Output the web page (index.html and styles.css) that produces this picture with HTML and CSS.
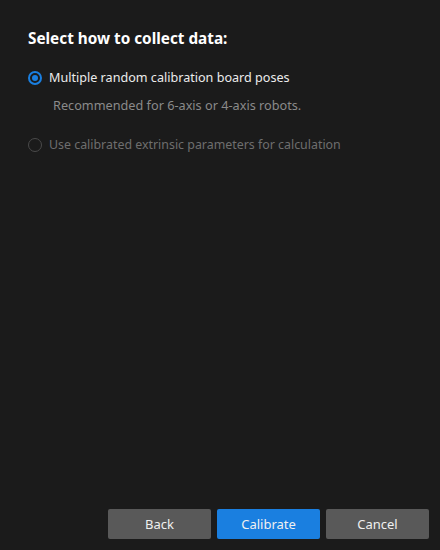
FILE: index.html
```html
<!DOCTYPE html>
<html>
<head>
<meta charset="utf-8">
<link rel="stylesheet" href="styles.css">
</head>
<body>
<div class="dialog">
  <div class="content">
    <h1 class="title">Select how to collect data:</h1>
    <label class="option">
      <span class="radio checked"><span class="dot"></span></span>
      <span class="label">Multiple random calibration board poses</span>
    </label>
    <div class="desc">Recommended for 6-axis or 4-axis robots.</div>
    <label class="option disabled">
      <span class="radio"></span>
      <span class="label">Use calibrated extrinsic parameters for calculation</span>
    </label>
  </div>
  <div class="footer">
    <button class="btn">Back</button>
    <button class="btn primary">Calibrate</button>
    <button class="btn">Cancel</button>
  </div>
</div>
</body>
</html>
```
FILE: styles.css
```css
html, body {
  margin: 0;
  padding: 0;
  background: #1b1b1b;
}
.dialog {
  width: 440px;
  height: 550px;
  display: flex;
  flex-direction: column;
  font-family: "Noto Sans", "Open Sans", sans-serif;
  color: #e6e6e6;
  box-sizing: border-box;
}
.content {
  flex: 1;
  padding: 28px 27px 0 28px;
  display: flex;
  flex-direction: column;
}
.title {
  margin: 0 0 21px 0;
  font-size: 15.3px;
  font-weight: 700;
  color: #ffffff;
  line-height: 20px;
}
.option {
  display: flex;
  align-items: center;
  gap: 7px;
  font-size: 12.6px;
  line-height: 18px;
  color: #ececec;
}
.radio {
  width: 14px;
  height: 14px;
  box-sizing: border-box;
  border-radius: 50%;
  border: 1px solid #4a4a4a;
  display: flex;
  align-items: center;
  justify-content: center;
  flex: none;
}
.radio.checked {
  border: 2px solid #1a7fe0;
}
.dot {
  width: 6px;
  height: 6px;
  border-radius: 50%;
  background: #1a7fe0;
}
.desc {
  margin: 9px 0 0 25px;
  font-size: 12.7px;
  line-height: 18px;
  color: #8a8a8a;
}
.option.disabled {
  margin-top: 22px;
  color: #6e6e6e;
  font-size: 12.4px;
}
.footer {
  display: flex;
  justify-content: flex-end;
  gap: 6px;
  padding: 0 11px 11px 0;
}
.btn {
  width: 103px;
  height: 30px;
  border: none;
  border-radius: 2px;
  background: #595959;
  color: #f0f0f0;
  font-family: "Noto Sans", "Open Sans", sans-serif;
  font-size: 13px;
  padding: 0;
}
.btn.primary {
  background: #1a7fe0;
}
```
